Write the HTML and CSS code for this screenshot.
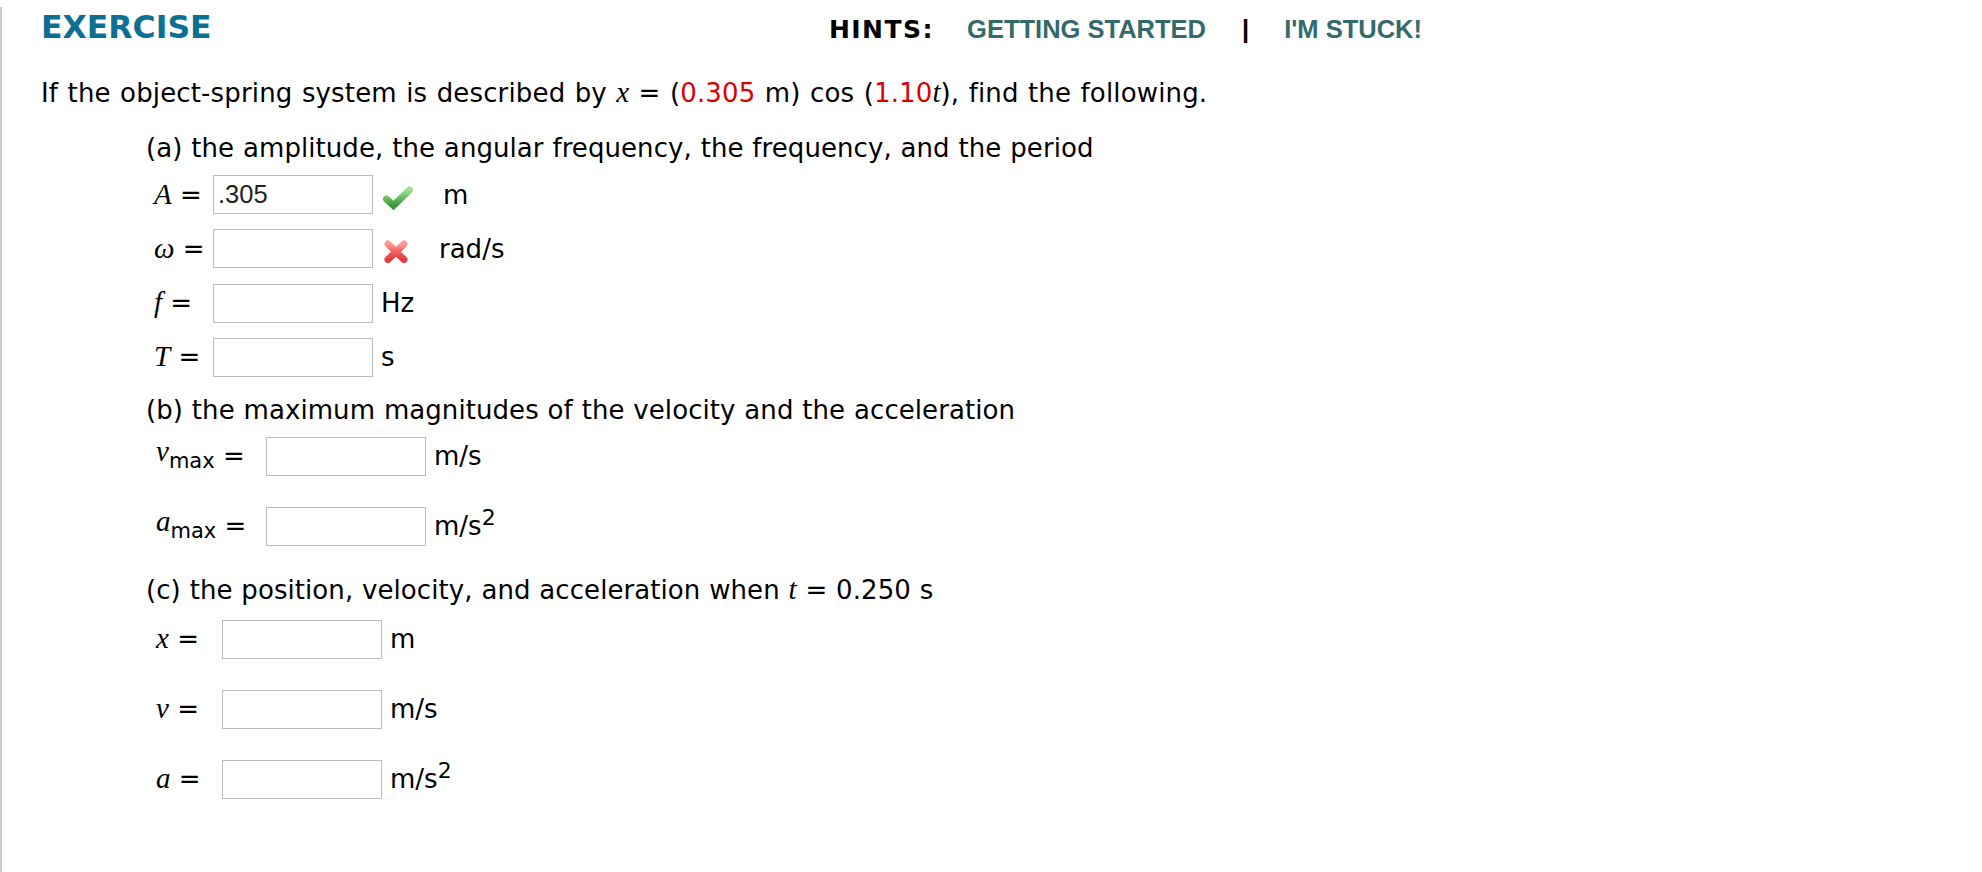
FILE: index.html
```html
<!DOCTYPE html>
<html>
  <head>
    <meta charset="utf-8" />
    <title>Exercise</title>
    <link rel="stylesheet" href="styles.css">
  </head>
  <body>
    <div class="page">
      <!-- header -->
      <div class="top">
        <h1 class="title">EXERCISE</h1>
        <div class="hints">
          <span class="hints-label">HINTS:</span>
          <a class="hint-link">GETTING STARTED</a>
          <span class="sep">|</span>
          <a class="hint-link">I'M STUCK!</a>
        </div>
      </div>

      <p class="intro">If the object-spring system is described by <i class="var">x</i> = (<span class="num">0.305</span> m) cos (<span class="num">1.10</span><i class="var">t</i>), find the following.</p>

      <!-- (a) -->
      <p class="part-title part-title-a">(a) the amplitude, the angular frequency, the frequency, and the period</p>
      <div class="answers answers-a">
        <span class="label"><i class="var">A</i> =</span>
        <input class="answer" type="text" value=".305">
        <span class="unit"><svg class="mark mark-ok" width="30" height="24" viewBox="0 0 30 24">
            <defs>
              <linearGradient id="okGrad" x1="0" y1="0" x2="0" y2="1">
                <stop offset="0" stop-color="#a6dc96" />
                <stop offset="0.5" stop-color="#6cbf62" />
                <stop offset="1" stop-color="#3d963d" />
              </linearGradient>
            </defs>
            <path d="M3.5 13 L10.5 19.5 L26.5 4" fill="none" stroke="url(#okGrad)" stroke-width="7" stroke-linecap="round" stroke-linejoin="miter" />
          </svg>m</span>

        <span class="label"><i class="var">ω</i> =</span>
        <input class="answer" type="text">
        <span class="unit"><svg class="mark mark-bad" width="26" height="25" viewBox="0 0 26 25">
            <defs>
              <linearGradient id="badGrad" x1="0" y1="0" x2="0" y2="1">
                <stop offset="0" stop-color="#ff9a9a" />
                <stop offset="0.45" stop-color="#f46464" />
                <stop offset="1" stop-color="#e23c3c" />
              </linearGradient>
            </defs>
            <path d="M5 5 L21 20.5 M21 5 L5 20.5" fill="none" stroke="url(#badGrad)" stroke-width="7" stroke-linecap="round" />
          </svg>rad/s</span>

        <span class="label"><i class="var">f</i> =</span>
        <input class="answer" type="text">
        <span class="unit">Hz</span>

        <span class="label"><i class="var">T</i> =</span>
        <input class="answer" type="text">
        <span class="unit">s</span>
      </div>

      <!-- (b) -->
      <p class="part-title part-title-b">(b) the maximum magnitudes of the velocity and the acceleration</p>
      <div class="answers answers-b">
        <span class="label"><i class="var var-up">v</i><span class="sub">max</span> =</span>
        <input class="answer" type="text">
        <span class="unit">m/s</span>

        <span class="label"><i class="var var-up">a</i><span class="sub">max</span> =</span>
        <input class="answer" type="text">
        <span class="unit">m/s<span class="sup">2</span></span>
      </div>

      <!-- (c) -->
      <p class="part-title part-title-c">(c) the position, velocity, and acceleration when <i class="var">t</i> = 0.250 s</p>
      <div class="answers answers-c">
        <span class="label"><i class="var">x</i> =</span>
        <input class="answer" type="text">
        <span class="unit">m</span>

        <span class="label"><i class="var">v</i> =</span>
        <input class="answer" type="text">
        <span class="unit">m/s</span>

        <span class="label"><i class="var">a</i> =</span>
        <input class="answer" type="text">
        <span class="unit">m/s<span class="sup">2</span></span>
      </div>
    </div>
  </body>
</html>
```

FILE: styles.css
```css
html,
body {
  margin: 0;
  background: #fff;
}

.page {
  /* grey rule down the left edge */
  border-left: 2px solid #cbcbcb;
  min-height: 872px;
  box-sizing: border-box;
  padding: 0 0 0 39px;
  font-family: "DejaVu Sans", Verdana, sans-serif;
  font-size: 26px;
  line-height: 32px;
  color: #000;
}

/* header */
.top {
  display: flex;
  align-items: baseline;
  width: 1381px;
  margin-top: 7px;
  height: 40px;
}

.title {
  margin: 0;
  font-family: "DejaVu Sans", Verdana, sans-serif;
  font-weight: bold;
  font-size: 31.5px;
  line-height: 40px;
  color: #0b7091;
}

.hints {
  margin-left: auto;
  display: flex;
  align-items: baseline;
  line-height: 40px;
}

.hints-label {
  font-family: "DejaVu Sans", Verdana, sans-serif;
  font-weight: bold;
  font-size: 25px;
  letter-spacing: 1.5px;
  color: #000;
  margin-right: 33px;
}

.hint-link,
.sep {
  font-family: "Liberation Sans", Arial, sans-serif;
  font-weight: bold;
  font-size: 25.5px;
}

.hint-link {
  color: #336a6a;
}

.sep {
  color: #000;
  margin: 0 35px 0 36px;
}

/* text */
.intro {
  margin: 30px 0 0;
  word-spacing: 1px;
  letter-spacing: 0.15px;
}

.part-title {
  margin: 0 0 0 105px;
  word-spacing: 0.5px;
  letter-spacing: 0.07px;
}

.num {
  color: #dd0000;
}

.var {
  font-family: "Liberation Serif", "Times New Roman", serif;
  font-style: italic;
  font-size: 29px;
  line-height: 1;
  letter-spacing: 0;
}

.var-up {
  vertical-align: 4px;
  line-height: 0;
}

.sub {
  font-size: 21px;
  vertical-align: -3px;
  line-height: 0;
}

.sup {
  font-size: 22px;
  vertical-align: 10px;
  line-height: 0;
}

.part-title-a {
  margin-top: 23px;
}

.part-title-b {
  margin-top: 17px;
}

.part-title-c {
  margin-top: 28px;
}

/* answer rows */
.answers {
  display: grid;
  grid-auto-rows: 39px;
  align-items: center;
}

.answers-a {
  margin: 11px 0 0 113px;
  grid-template-columns: 59px 160px auto;
  row-gap: 15.3px;
}

.answers-b {
  margin: 11px 0 0 115px;
  grid-template-columns: 110px 160px auto;
  row-gap: 31px;
}

.answers-c {
  margin: 14px 0 0 115px;
  grid-template-columns: 66px 160px auto;
  row-gap: 31px;
}

.label {
  white-space: nowrap;
}

.answer {
  box-sizing: border-box;
  width: 160px;
  height: 39px;
  margin: 0;
  padding: 0 4px;
  border: 1px solid #bdbdbd;
  border-radius: 0;
  font-family: "Liberation Sans", Arial, sans-serif;
  font-size: 25.5px;
  color: #222;
  background: #fff;
  outline: none;
}

.unit {
  padding-left: 8px;
  white-space: nowrap;
}

.mark {
  vertical-align: -6px;
  margin-left: 2px;
  margin-right: 30px;
}
```
